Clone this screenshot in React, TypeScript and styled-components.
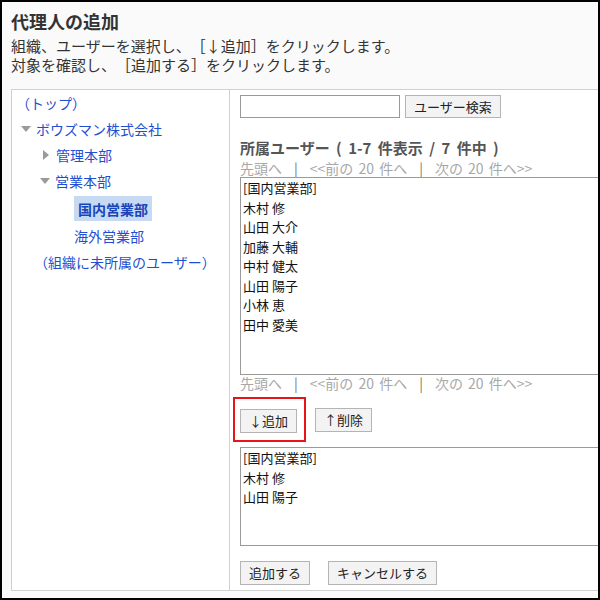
import React from 'react';
import styled, { createGlobalStyle } from 'styled-components';

const GlobalStyle = createGlobalStyle`
  html, body {
    margin: 0;
    padding: 0;
    background: #fff;
  }
  * {
    box-sizing: border-box;
  }
`;

const Frame = styled.div`
  width: 600px;
  height: 600px;
  border: 2px solid #000;
  background: #fafafa;
  overflow: hidden;
  padding: 9px 0 0 9px;
  font-family: "Noto Sans CJK JP", "Noto Sans", sans-serif;
  color: #333;
  text-spacing-trim: space-all;
`;

const Title = styled.h1`
  margin: 0;
  font-size: 18px;
  line-height: 20px;
  font-weight: bold;
  color: #333;
`;

const Description = styled.p`
  margin: 5px 0 0;
  font-size: 15px;
  line-height: 19px;
`;

const Panel = styled.div`
  margin-top: 15px;
  width: 640px;
  height: 502px;
  display: grid;
  grid-template-columns: 218px 1fr;
  border: 1px solid #d0d0d0;
  background: #fff;
`;

const TreeCell = styled.div`
  border-right: 1px solid #d0d0d0;
  padding: 0;
`;

const TreeRow = styled.div<{ $indent: number; $gap?: number }>`
  display: flex;
  align-items: center;
  height: 26px;
  margin-top: ${(p) => p.$gap ?? 0}px;
  padding-left: ${(p) => p.$indent}px;
  font-size: 14px;
  color: #1f4fcf;
  white-space: nowrap;
`;

const Toggle = styled.span`
  display: inline-flex;
  align-items: center;
  width: 15px;
  flex: none;
`;

const Selected = styled.span`
  display: inline-flex;
  align-items: center;
  height: 25px;
  padding: 0 4px;
  background: #c6dbf3;
  font-weight: bold;
  color: #1a44b8;
`;

const UserCell = styled.div`
  padding: 5px 0 0 10px;
  display: flex;
  flex-direction: column;
  align-items: flex-start;
`;

const SearchRow = styled.div`
  display: flex;
  gap: 5px;
`;

const SearchInput = styled.input`
  width: 160px;
  height: 23px;
  border: 1px solid #999;
  padding: 0 4px;
  font: inherit;
  background: #fff;
`;

const Button = styled.button<{ $pad?: number }>`
  height: 24px;
  padding: 0 ${(p) => p.$pad ?? 10}px;
  border: 1px solid #b4b4b4;
  border-radius: 0;
  background: #f3f3f3;
  font-family: "Noto Sans CJK JP", "Noto Sans", sans-serif;
  font-size: 13px;
  color: #222;
  line-height: 22px;
  cursor: pointer;
  white-space: nowrap;
`;

const SectionTitle = styled.div`
  margin-top: 21px;
  font-size: 15px;
  line-height: 18px;
  font-weight: bold;
  color: #555;
  white-space: nowrap;
  word-spacing: 3px;
`;

const Pager = styled.div<{ $top?: number }>`
  margin-top: ${(p) => p.$top ?? 2}px;
  font-size: 14px;
  line-height: 16px;
  color: #a8a8a8;
  white-space: nowrap;
  word-spacing: 2px;
`;

const Sep = styled.span`
  margin: 0 12px;
  color: #777;
`;

const ListBox = styled.div<{ $height: number; $top: number }>`
  margin-top: ${(p) => p.$top}px;
  width: 420px;
  height: ${(p) => p.$height}px;
  border: 1px solid #9a9a9a;
  padding: 0 2px;
  background: #fff;
`;

const ListItem = styled.div`
  font-size: 13px;
  line-height: 19.5px;
  color: #111;
  white-space: nowrap;
`;

const MoveRow = styled.div`
  margin-top: 6px;
  margin-left: -7px;
  display: flex;
  align-items: center;
  gap: 9px;
`;

const Highlight = styled.div`
  border: 2px solid #e8141a;
  padding: 8px 7px 7px 5px;
`;

const FooterRow = styled.div`
  margin-top: 15px;
  display: flex;
  gap: 18px;
`;

const Triangle = ({ dir }: { dir: 'down' | 'right' }) =>
  dir === 'down' ? (
    <svg width="10" height="7" viewBox="0 0 10 7">
      <polygon points="0,0 10,0 5,6" fill="#9a9a9a" />
    </svg>
  ) : (
    <svg width="7" height="10" viewBox="0 0 7 10">
      <polygon points="0,0 6,5 0,10" fill="#9a9a9a" />
    </svg>
  );

const members = ['[国内営業部]', '木村 修', '山田 大介', '加藤 大輔', '中村 健太', '山田 陽子', '小林 恵', '田中 愛美'];
const chosen = ['[国内営業部]', '木村 修', '山田 陽子'];

const PagerLinks = ({ top }: { top?: number }) => (
  <Pager $top={top}>
    先頭へ<Sep>|</Sep>&lt;&lt;前の 20 件へ<Sep>|</Sep>次の 20 件へ&gt;&gt;
  </Pager>
);

export default function App() {
  return (
    <Frame>
      <GlobalStyle />
      <Title>代理人の追加</Title>
      <Description>
        組織、ユーザーを選択し、［↓追加］をクリックします。
        <br />
        対象を確認し、［追加する］をクリックします。
      </Description>

      <Panel>
        <TreeCell>
          <TreeRow $indent={4}>（トップ）</TreeRow>
          <TreeRow $indent={9}>
            <Toggle>
              <Triangle dir="down" />
            </Toggle>
            ボウズマン株式会社
          </TreeRow>
          <TreeRow $indent={29}>
            <Toggle style={{ paddingLeft: 2 }}>
              <Triangle dir="right" />
            </Toggle>
            管理本部
          </TreeRow>
          <TreeRow $indent={28}>
            <Toggle>
              <Triangle dir="down" />
            </Toggle>
            営業本部
          </TreeRow>
          <TreeRow $indent={62} $gap={2} style={{ height: 25 }}>
            <Selected>国内営業部</Selected>
          </TreeRow>
          <TreeRow $indent={62} $gap={2}>海外営業部</TreeRow>
          <TreeRow $indent={22} style={{ height: 25 }}>（組織に未所属のユーザー）</TreeRow>
        </TreeCell>

        <UserCell>
          <SearchRow>
            <SearchInput type="text" />
            <Button $pad={8} style={{ height: 23 }}>ユーザー検索</Button>
          </SearchRow>

          <SectionTitle>所属ユーザー ( 1-7 件表示 / 7 件中 )</SectionTitle>
          <PagerLinks top={3} />
          <ListBox $height={198} $top={1}>
            {members.map((m) => (
              <ListItem key={m}>{m}</ListItem>
            ))}
          </ListBox>
          <PagerLinks top={0} />

          <MoveRow>
            <Highlight>
              <Button $pad={8}>↓追加</Button>
            </Highlight>
            <Button $pad={8}>↑削除</Button>
          </MoveRow>

          <ListBox $height={99} $top={5}>
            {chosen.map((m) => (
              <ListItem key={m}>{m}</ListItem>
            ))}
          </ListBox>

          <FooterRow>
            <Button $pad={8}>追加する</Button>
            <Button $pad={8}>キャンセルする</Button>
          </FooterRow>
        </UserCell>
      </Panel>
    </Frame>
  );
}
